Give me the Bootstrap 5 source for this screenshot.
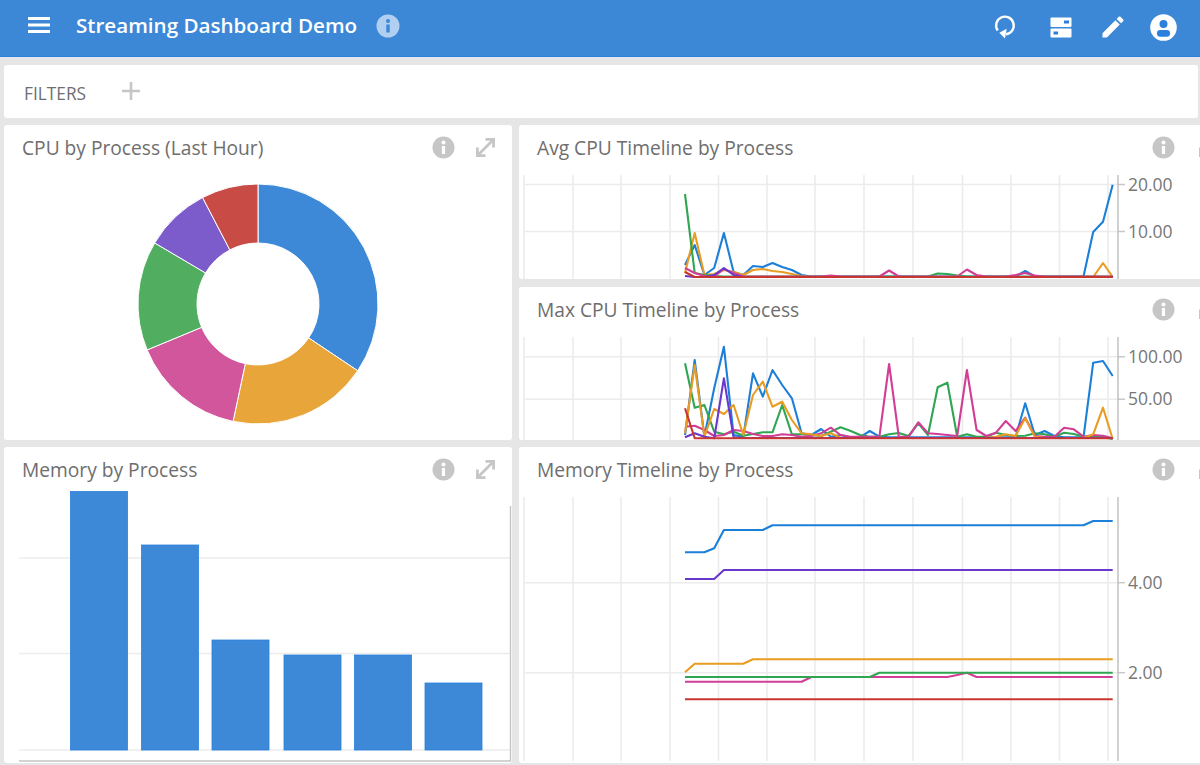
<!DOCTYPE html>
<html lang="en">
<head>
  <meta charset="UTF-8" />
  <title>Streaming Dashboard Demo</title>
  <link href="https://cdn.jsdelivr.net/npm/bootstrap@5.3.0/dist/css/bootstrap.min.css" rel="stylesheet"/>
  <style>
    html, body { height: 765px; overflow: hidden; }
    body { background: #e6e6e6; font-family: "Open Sans", sans-serif; color: #6e6e6e; }
    .topbar { height: 57px; background: #3d88d6; border-bottom: 1px solid #2a80dc; padding: 0 11px 2px 27px; }
    .topbar-left { margin-bottom: 4px; }
    .topbar-menu { width: 24px; height: 18px; margin-right: 25px; }
    .topbar-title { font-size: 20.6px; font-weight: 600; color: #fff; margin: 0 19px 0 0; line-height: 1; }
    .topbar-info { margin-top: 2px; }
    .topbar-slot { height: 30px; display: flex; align-items: center; justify-content: center; }
    .slot-wide { width: 56px; }
    .slot-mid { width: 52px; }
    .slot-narrow { width: 48px; }
    .page-wrap { padding: 8px 2px 0 4px; width: 1232px; }
    .filter-bar { width: 1194px; height: 53px; padding: 5px 0 0 20px; border-radius: 3px; margin-bottom: 7px; font-size: 17.3px; }
    .filter-plus { margin-left: 36px; margin-bottom: 7px; }
    .dash-grid { display: grid; grid-template-columns: 508px 713px; grid-template-rows: 155px 153px 316px; gap: 7px; }
    .dash-panel { border: 0; border-radius: 3px; overflow: hidden; }
    .panel-span { grid-row: span 2; }
    .panel-short { height: 154px; }
    .panel-head { height: 44px; padding: 0 14px 0 18px; }
    .panel-title { font-size: 19.2px; font-weight: 400; color: #6e6e6e; margin: 2px 0 0; line-height: 1; }
    .panel-tools { gap: 18px; }
    .chart-svg { display: block; width: 100%; flex: 1 1 0; min-height: 0; }
    .chart-svg text { font: 17.5px "Open Sans", sans-serif; fill: #777; }
    .panel-wide .panel-head { padding-right: 0; }
    .panel-wide .panel-tools { gap: 21px; margin-right: 11px; }
  </style>
</head>
<body>

  <!-- Top bar -->
  <nav class="navbar topbar d-flex align-items-center justify-content-between flex-nowrap">
    <div class="d-flex align-items-center topbar-left">
      <svg class="topbar-menu" viewBox="0 0 24 18"><path d="M1 1h22v3H1zM1 7.5h22v3H1zM1 14h22v3H1z" fill="#fff"/></svg>
      <h1 class="topbar-title">Streaming Dashboard Demo</h1>
      <svg class="topbar-info" width="24" height="24" viewBox="0 0 24 24"><circle cx="12" cy="12" r="11.5" fill="#b1d0f1"/><circle cx="12" cy="7" r="2" fill="#3d88d6"/><rect x="10.3" y="10.5" width="3.4" height="8" fill="#3d88d6"/></svg>
    </div>
    <div class="d-flex align-items-center">
      <div class="topbar-slot slot-wide"><svg width="26" height="26" viewBox="0 0 26 26"><path d="M5.7 16.5A8.8 8.8 0 1 1 14 20.2" fill="none" stroke="#fff" stroke-width="2.4"/><path d="M7.3 18.8L14.7 14.8L13 24.5z" fill="#fff"/></svg></div>
      <div class="topbar-slot slot-wide"><svg width="22" height="21" viewBox="0 0 22 21"><rect x="0.5" y="0.5" width="21" height="9.5" rx="1" fill="#fff"/><rect x="0.5" y="11.5" width="21" height="9" rx="1" fill="#fff"/><rect x="14" y="3.5" width="5" height="3" fill="#2a80dc"/><rect x="3.5" y="14.5" width="4.5" height="3" fill="#2a80dc"/></svg></div>
      <div class="topbar-slot slot-narrow"><svg width="28" height="28" viewBox="0 0 24 24"><path fill="#fff" d="M20.71,7.04C21.1,6.65 21.1,6 20.71,5.63L18.37,3.29C18,2.9 17.35,2.9 16.96,3.29L15.12,5.12L18.87,8.87M3,17.25V21H6.75L17.81,9.93L14.06,6.18L3,17.25Z"/></svg></div>
      <div class="topbar-slot slot-mid"><svg width="27" height="27" viewBox="0 0 27 27"><circle cx="13.5" cy="13.5" r="13.3" fill="#fff"/><circle cx="13.5" cy="10" r="4" fill="#2a80dc"/><rect x="7" y="16" width="13" height="6.7" rx="3.2" fill="#2a80dc"/></svg></div>
    </div>
  </nav>

  <div class="page-wrap">
    <!-- Filters -->
    <div class="filter-bar bg-white d-flex align-items-center">
      <span>FILTERS</span>
      <svg class="filter-plus" width="18" height="18" viewBox="0 0 18 18"><path d="M7.7 0h2.6v7.7H18v2.6h-7.7V18H7.7v-7.7H0V7.7h7.7z" fill="#c6c6c6"/></svg>
    </div>

    <div class="dash-grid">
      <div class="card dash-panel panel-span">
        <div class="panel-head d-flex align-items-center justify-content-between">
          <h2 class="panel-title">CPU by Process (Last Hour)</h2>
          <div class="d-flex align-items-center panel-tools" data-tools="expand"></div>
        </div>
        <svg id="donutChart" class="chart-svg" viewBox="4 169 508 271"></svg>
      </div>

      <div class="card dash-panel panel-wide panel-short">
        <div class="panel-head d-flex align-items-center justify-content-between">
          <h2 class="panel-title">Avg CPU Timeline by Process</h2>
          <div class="d-flex align-items-center panel-tools" data-tools="expand"></div>
        </div>
        <svg id="avgChart" class="chart-svg" viewBox="519 169 713 110"></svg>
      </div>

      <div class="card dash-panel panel-wide">
        <div class="panel-head d-flex align-items-center justify-content-between">
          <h2 class="panel-title">Max CPU Timeline by Process</h2>
          <div class="d-flex align-items-center panel-tools" data-tools="expand"></div>
        </div>
        <svg id="maxChart" class="chart-svg" viewBox="519 331 713 109"></svg>
      </div>

      <div class="card dash-panel">
        <div class="panel-head d-flex align-items-center justify-content-between">
          <h2 class="panel-title">Memory by Process</h2>
          <div class="d-flex align-items-center panel-tools" data-tools="expand"></div>
        </div>
        <svg id="barChart" class="chart-svg" viewBox="4 491 508 272"></svg>
      </div>

      <div class="card dash-panel panel-wide">
        <div class="panel-head d-flex align-items-center justify-content-between">
          <h2 class="panel-title">Memory Timeline by Process</h2>
          <div class="d-flex align-items-center panel-tools" data-tools="expand"></div>
        </div>
        <svg id="memChart" class="chart-svg" viewBox="519 491 713 272"></svg>
      </div>
    </div>
  </div>

  <script src="https://cdn.jsdelivr.net/npm/bootstrap@5.3.0/dist/js/bootstrap.bundle.min.js"></script>
  <script>
    const infoIcon = '<svg width="23" height="23" viewBox="0 0 23 23"><circle cx="11.5" cy="11.5" r="11" fill="#c6c6c6"/><circle cx="11.5" cy="6.6" r="2" fill="#fff"/><rect x="9.9" y="10" width="3.2" height="8" fill="#fff"/></svg>';
    const expandIcon = '<svg width="25" height="25" viewBox="0 0 25 25"><path fill="none" stroke="#c6c6c6" stroke-width="2.8" d="M4.4 12.5v8.1h8.1M12.5 4.4h8.1v8.1M5 20L20 5"/></svg>';
    document.querySelectorAll('[data-tools]').forEach(t => { t.innerHTML = infoIcon + expandIcon; });

    const COLORS = { blue: '#1c7fd8', orange: '#ea9c22', green: '#2fa652', pink: '#d23d96', purple: '#6a38cc', red: '#c7372f' };
    const ptX = i => 685 + 9.72 * i;
    const gridXs = [524, 573, 621, 670, 718.5, 767, 815, 864, 913, 962.5, 1011, 1059.5, 1108];

    // series are y pixel values; a sparse map fills the gaps with base
    function series(base, points) {
      const out = [];
      for (let i = 0; i < 45; i++) out.push(points[i] !== undefined ? points[i] : base);
      return out;
    }

    function timeline(id, top, bottom, ticks, lines) {
      let s = '';
      gridXs.forEach(x => { s += `<line x1="${x}" x2="${x}" y1="${top}" y2="${bottom}" stroke="#ececec" stroke-width="1.6"/>`; });
      ticks.forEach(t => {
        s += `<line x1="524" x2="1118" y1="${t.y}" y2="${t.y}" stroke="#ececec" stroke-width="1.4"/>`;
        s += `<line x1="1118" x2="1125" y1="${t.y}" y2="${t.y}" stroke="#c8c8c8" stroke-width="1.4"/>`;
        s += `<text x="1128" y="${t.y + 6}">${t.label}</text>`;
      });
      s += `<line x1="1118" x2="1118" y1="${top}" y2="${bottom}" stroke="#bdbdbd" stroke-width="1.4"/>`;
      lines.forEach(l => {
        const pts = l.ys.map((y, i) => ptX(i).toFixed(1) + ',' + y).join(' ');
        s += `<polyline points="${pts}" fill="none" stroke="${COLORS[l.c]}" stroke-width="2.1" stroke-linejoin="round"/>`;
      });
      document.getElementById(id).innerHTML = s;
    }

    // Avg CPU
    timeline('avgChart', 175, 279, [{ y: 184.5, label: '20.00' }, { y: 231.5, label: '10.00' }], [
      { c: 'blue', ys: series(276.5, { 0: 265, 1: 245, 2: 275, 3: 268, 4: 233, 5: 272, 6: 275, 7: 266, 8: 267, 9: 263, 10: 267, 11: 270, 12: 275, 35: 271, 41: 276.5, 42: 232, 43: 221.7, 44: 184.7 }) },
      { c: 'orange', ys: series(277, { 0: 273, 1: 233, 2: 275, 3: 274, 4: 270, 5: 272, 6: 275, 7: 270, 8: 269, 9: 271, 10: 272, 11: 274, 12: 276, 43: 263 }) },
      { c: 'green', ys: series(276.5, { 0: 194, 1: 273, 2: 275, 3: 276, 26: 273.5, 27: 274, 28: 275.5 }) },
      { c: 'pink', ys: series(276.5, { 0: 268, 1: 273, 2: 276, 4: 269, 5: 273, 15: 275.5, 21: 270.5, 29: 269.5, 30: 275, 34: 275, 35: 273, 36: 275.5 }) },
      { c: 'purple', ys: series(277, { 0: 276, 3: 275, 4: 268, 5: 275 }) },
      { c: 'red', ys: series(277, { 0: 272, 1: 277 }) }
    ]);

    // Max CPU
    const y5 = z => +(335 + z / 3).toFixed(1);
    const maxData = pts => { const o = {}; Object.keys(pts).forEach(k => { o[k] = y5(pts[k]); }); return o; };
    timeline('maxChart', 337, 441, [{ y: 356.7, label: '100.00' }, { y: 399.3, label: '50.00' }], [
      { c: 'blue', ys: series(y5(307), maxData({ 0: 300, 1: 75, 2: 305, 3: 160, 4: 35, 5: 300, 6: 305, 7: 115, 8: 185, 9: 105, 10: 150, 11: 190, 12: 295, 13: 300, 14: 282, 15: 305, 16: 300, 19: 288, 20: 305, 35: 205, 36: 300, 37: 288, 38: 303, 42: 83, 43: 78, 44: 123 })) },
      { c: 'green', ys: series(y5(305), maxData({ 0: 85, 1: 218, 2: 210, 3: 290, 4: 298, 5: 290, 6: 302, 7: 297, 8: 292, 9: 292, 10: 210, 11: 298, 12: 298, 13: 300, 14: 303, 15: 290, 16: 277, 17: 287, 18: 300, 21: 298, 22: 294, 23: 303, 24: 265, 25: 300, 26: 157, 27: 143, 28: 305, 29: 298, 32: 293, 33: 300, 34: 303, 35: 302, 36: 295, 37: 298, 39: 293, 40: 297, 44: 312 })) },
      { c: 'pink', ys: series(y5(305), maxData({ 0: 275, 1: 272, 2: 285, 3: 303, 4: 300, 5: 285, 6: 288, 7: 297, 8: 303, 9: 303, 10: 298, 11: 300, 12: 305, 13: 303, 14: 295, 15: 278, 16: 300, 21: 87, 24: 262, 25: 295, 26: 297, 27: 300, 28: 303, 29: 105, 30: 285, 31: 303, 32: 293, 33: 258, 34: 288, 35: 248, 36: 303, 39: 278, 40: 283, 41: 305, 42: 300, 43: 302, 44: 310 })) },
      { c: 'orange', ys: series(y5(309), maxData({ 0: 295, 1: 90, 2: 305, 3: 222, 4: 237, 5: 210, 6: 300, 7: 180, 8: 140, 9: 215, 10: 200, 11: 255, 12: 295, 13: 298, 14: 303, 15: 295, 16: 308, 32: 305, 33: 298, 34: 303, 35: 250, 36: 305, 42: 298, 43: 218, 44: 312 })) },
      { c: 'purple', ys: series(y5(309), maxData({ 0: 307, 1: 295, 2: 305, 3: 310, 4: 130, 5: 307 })) },
      { c: 'red', ys: series(y5(310), maxData({ 0: 220, 1: 310 })) }
    ]);

    // Memory timeline
    const y7 = z => +(500 + z / 3).toFixed(1);
    const memLine = (c, base, pts) => ({ c, ys: series(y7(base), Object.fromEntries(Object.entries(pts).map(([k, v]) => [k, y7(v)]))) });
    const fill = (from, to, v) => { const o = {}; for (let i = from; i <= to; i++) o[i] = v; return o; };
    timeline('memChart', 497, 761, [{ y: 582.7, label: '4.00' }, { y: 672.7, label: '2.00' }], [
      memLine('blue', 76, { ...fill(0, 2, 157), 3: 145, ...fill(4, 8, 90), 42: 63, 43: 63, 44: 63 }),
      memLine('purple', 210, { ...fill(0, 3, 237) }),
      memLine('orange', 478, { 0: 517, ...fill(1, 6, 491) }),
      memLine('pink', 531, { ...fill(0, 12, 545), 28: 525, 29: 518 }),
      memLine('green', 518, { ...fill(0, 19, 531) }),
      memLine('red', 598, {})
    ]);

    // Donut, angles in degrees clockwise from the top
    const donut = [
      { to: 123.8, fill: '#3d89d8' }, { to: 192, fill: '#e8a63a' }, { to: 247.5, fill: '#d2569c' },
      { to: 300.6, fill: '#51ad60' }, { to: 332.5, fill: '#7c5bcb' }, { to: 360, fill: '#c84b45' }
    ];
    const polar = (r, a) => { const t = (a - 90) * Math.PI / 180; return (258 + r * Math.cos(t)).toFixed(2) + ' ' + (304 + r * Math.sin(t)).toFixed(2); };
    let from = 0, donutSvg = '';
    donut.forEach(d => {
      const large = d.to - from > 180 ? 1 : 0;
      donutSvg += `<path d="M${polar(120, from)}A120 120 0 ${large} 1 ${polar(120, d.to)}L${polar(61, d.to)}A61 61 0 ${large} 0 ${polar(61, from)}Z" fill="${d.fill}" stroke="#fff" stroke-width="1"/>`;
      from = d.to;
    });
    document.getElementById('donutChart').innerHTML = donutSvg;

    // Bars
    const bars = [[70.5, 491.5], [141.5, 545], [212, 640], [284, 655], [354.5, 655], [425, 683]];
    let barSvg = '';
    [558, 653.5, 750].forEach(y => { barSvg += `<line x1="19" x2="510" y1="${y}" y2="${y}" stroke="#ececec" stroke-width="1.4"/>`; });
    barSvg += '<line x1="510.5" x2="510.5" y1="506" y2="761" stroke="#c4c4c4" stroke-width="1.4"/><line x1="19" x2="511" y1="761" y2="761" stroke="#c4c4c4" stroke-width="1.4"/>';
    bars.forEach(b => {
      barSvg += `<rect x="${b[0]}" y="${b[1]}" width="57" height="${750 - b[1]}" fill="#3d89d8" stroke="#2a80dc" stroke-width="0.8"/>`;
    });
    document.getElementById('barChart').innerHTML = barSvg;
  </script>
</body>
</html>
